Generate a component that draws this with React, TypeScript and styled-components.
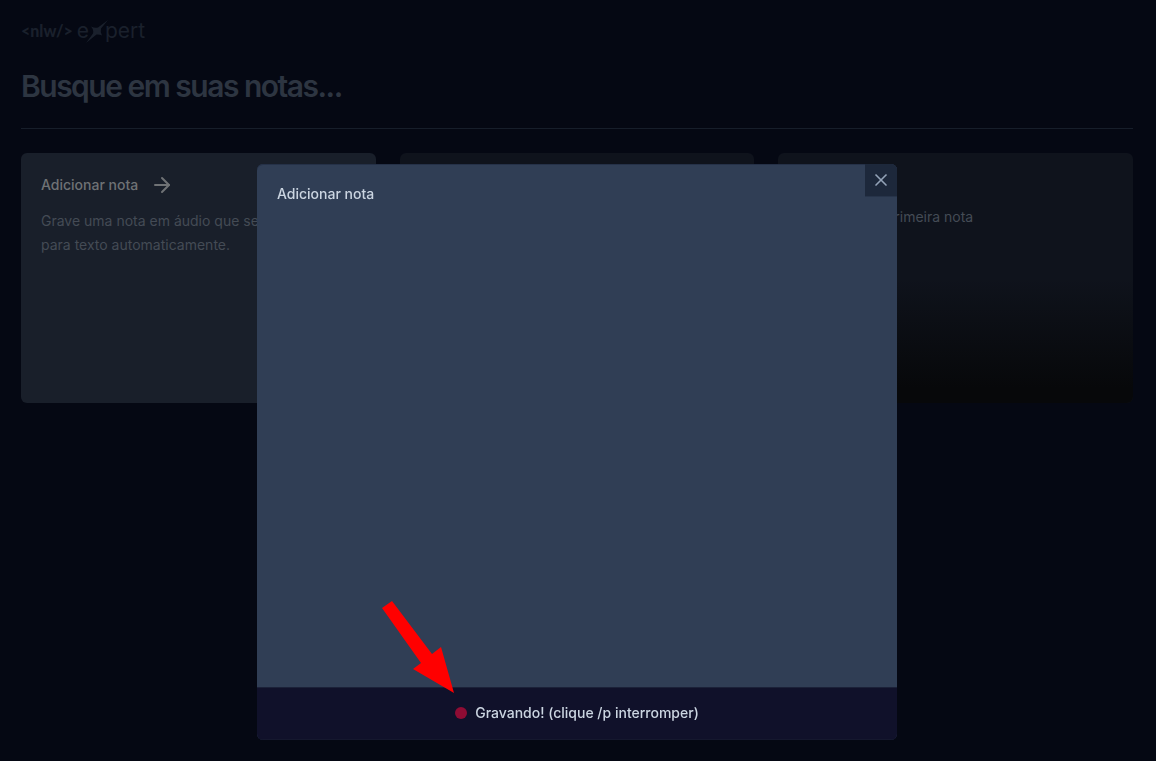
import { useState } from 'react';
import styled, { createGlobalStyle } from 'styled-components';
import { ArrowRight, X } from 'lucide-react';

const GlobalStyle = createGlobalStyle`
  *, *::before, *::after { box-sizing: border-box; }
  body {
    margin: 0;
    background: #050813;
    font-family: Inter, "Liberation Sans", sans-serif;
    font-size: 14px;
    line-height: 20px;
  }
  button, input { font: inherit; color: inherit; border: 0; padding: 0; background: transparent; }
  h2, p { margin: 0; font: inherit; }
`;

const Page = styled.div`
  display: flex;
  flex-direction: column;
  gap: 24px;
  min-height: 100vh;
  padding: 20px 23px 20px 21px;
`;

const Logo = styled.a`
  display: flex;
  align-items: center;
  align-self: flex-start;
  height: 22px;
  margin-bottom: 2px;
  gap: 4px;
  color: #1a202c;
  text-decoration: none;
`;

const LogoTag = styled.span`
  font-family: Lato, sans-serif;
  font-size: 16px;
  font-weight: 900;
  line-height: 24px;
`;

const LogoWord = styled.span`
  display: flex;
  align-items: center;
  font-size: 21px;
  font-weight: 400;
  line-height: 24px;
`;

const LogoStar = styled.svg`
  width: 24px;
  height: 24px;
  margin: 0 -4px;
`;

const Search = styled.input`
  width: 100%;
  height: 36px;
  color: #2d3541;
  font-size: 30px;
  font-weight: 600;
  line-height: 36px;
  letter-spacing: -0.05em;
  outline: none;
  &::placeholder { color: #2d3541; opacity: 1; }
`;

const Divider = styled.div`
  height: 1px;
  background: #171e2a;
`;

const Notes = styled.main`
  display: grid;
  grid-template-columns: repeat(3, minmax(0, 1fr));
  grid-auto-rows: 250px;
  gap: 24px;
`;

const Card = styled.button<{ $tone: 'new' | 'saved' }>`
  position: relative;
  display: flex;
  flex-direction: column;
  gap: ${(p) => (p.$tone === 'new' ? 12 : 8)}px;
  padding: 20px;
  overflow: hidden;
  border-radius: 6px;
  text-align: left;
  line-height: 24px;
  color: #444b55;
  background: ${(p) => (p.$tone === 'new' ? '#191f2a' : '#0f131c')};
`;

const CardTitle = styled.span`
  display: flex;
  align-items: center;
  gap: 12px;
  color: #6f7275;
  font-weight: 500;
`;

const Fade = styled.span`
  position: absolute;
  inset: 50% 0 0;
  background: linear-gradient(to top, #07080a, #07080a 12%, #07080a00);
`;

const Overlay = styled.div`
  position: fixed;
  inset: 0;
  display: flex;
  justify-content: center;
  padding: 164px 2px 21px 0;
`;

const Dialog = styled.section`
  position: relative;
  display: flex;
  flex-direction: column;
  width: 100%;
  max-width: 640px;
  overflow: hidden;
  border-radius: 6px;
  background: #303e55;
  box-shadow: inset 0 1px #253148;
  color: #cbd5e1;
  font-weight: 500;
`;

const DialogBody = styled.div`
  flex: 1;
  padding: 20px;
`;

const Close = styled.button`
  position: absolute;
  top: 0;
  right: 0;
  display: flex;
  padding: 6px;
  color: #94a3b8;
  background: #1d283b;
  box-shadow: 0 1px #27344a;
`;

const Record = styled.button`
  display: flex;
  align-items: center;
  justify-content: center;
  gap: 8px;
  padding: 16px;
  border-bottom: 1px solid #15182e;
  background: #10112a;
  box-shadow: inset 0 1px #1b2138;
`;

const Dot = styled.span`
  width: 12px;
  height: 12px;
  border-radius: 50%;
  background: #8f0c34;
`;

const Pointer = styled.svg`
  position: absolute;
  left: 125px;
  bottom: 47px;
  width: 72px;
  height: 92px;
  pointer-events: none;
`;

const savedNotes = [
  { date: 'há 2 dias', text: 'Salvei minha segunda nota' },
  { date: 'há 3 dias', text: 'Salvei minha primeira nota' },
];

export default function App() {
  const [query, setQuery] = useState('');
  return (
    <>
      <GlobalStyle />
      <Page>
        <Logo href="#" aria-label="nlw expert">
          <LogoTag>{'<nlw/>'}</LogoTag>
          <LogoWord>
            e
            <LogoStar viewBox="0 0 24 24" fill="currentColor" aria-hidden="true">
              <path d="M23 1 16 9.500Q15 13 17 16.500Q14 15 11.500 15.500L1 24 8 14.500Q9 11 6 7.500Q10 9.500 13 8.500Z" />
            </LogoStar>
            pert
          </LogoWord>
        </Logo>
        <Search
          aria-label="Busque em suas notas"
          placeholder="Busque em suas notas..."
          value={query}
          onChange={(e) => setQuery(e.target.value)}
        />
        <Divider />
        <Notes>
          <Card $tone="new">
            <CardTitle>Adicionar nota <ArrowRight size={24} /></CardTitle>
            <span>Grave uma nota em áudio que será convertida para texto automaticamente.</span>
          </Card>
          {savedNotes.map((note) => (
            <Card key={note.date} $tone="saved">
              <CardTitle>{note.date}</CardTitle>
              <span>{note.text}</span>
              <Fade />
            </Card>
          ))}
        </Notes>
      </Page>
      <Overlay>
        <Dialog role="dialog" aria-modal="true" aria-labelledby="dialog-title">
          <Close aria-label="Fechar"><X size={20} /></Close>
          <DialogBody>
            <h2 id="dialog-title">Adicionar nota</h2>
          </DialogBody>
          <Record><Dot />Gravando! (clique /p interromper)</Record>
          <Pointer viewBox="0 0 72 92" fill="#ff0000" aria-hidden="true">
            <path d="M0 7 10 0 50 53 59 46 72 92 31 68 39 62Z" />
          </Pointer>
        </Dialog>
      </Overlay>
    </>
  );
}
